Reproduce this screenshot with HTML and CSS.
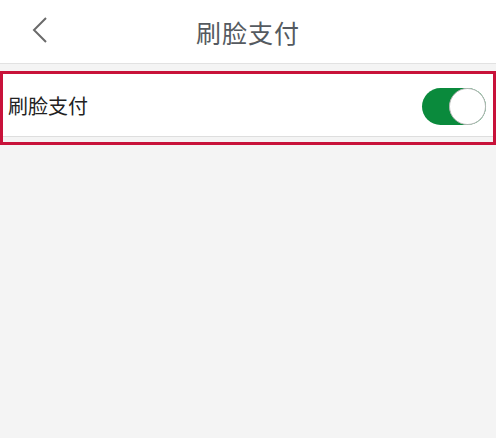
FILE: index.html
```html
<!DOCTYPE html>
<html lang="zh-CN">
<head>
    <meta charset="UTF-8">
    <meta name="viewport" content="width=device-width, initial-scale=1.0">
    <title>刷脸支付</title>
    <link rel="stylesheet" href="styles.css">
</head>
<body>
    <div class="header">
        <button class="back-button">
            <svg width="18" height="28" viewBox="0 0 18 28">
                <polyline points="15,2 3,14 15,26" fill="none" stroke="#6a6a6a" stroke-width="2"/>
            </svg>
        </button>
        <h1>刷脸支付</h1>
    </div>

    <div class="highlight">
        <div class="setting-row">
            <span class="setting-label">刷脸支付</span>
            <label class="switch">
                <input type="checkbox" checked>
                <span class="slider"></span>
            </label>
        </div>
    </div>
</body>
</html>
```

FILE: styles.css
```css
body {
    font-family: 'Noto Sans CJK SC', 'Noto Sans', sans-serif;
    margin: 0;
    padding: 0;
    background-color: #f4f4f4;
    height: 438px;
}
.header {
    position: relative;
    height: 63px;
    background-color: #fff;
    border-bottom: 1px solid #e2e2e2;
    display: flex;
    align-items: center;
    justify-content: center;
}
h1 {
    margin: 0;
    font-size: 25px;
    font-weight: normal;
    color: #555a60;
    letter-spacing: 1px;
}
.back-button {
    position: absolute;
    left: 31px;
    top: 16px;
    padding: 0;
    border: none;
    background: none;
    width: 18px;
    height: 28px;
}
.highlight {
    margin-top: 7px;
    border: 3px solid #c8123a;
    padding-bottom: 5px;
}
.setting-row {
    height: 62px;
    background-color: #fff;
    border-bottom: 1px solid #dedede;
    display: flex;
    align-items: center;
    justify-content: space-between;
    padding: 0 7px 0 5px;
}
.setting-label {
    font-size: 20px;
    color: #222;
}
.switch {
    position: relative;
    width: 64px;
    height: 37px;
    margin-top: 2px;
}
.switch input {
    display: none;
}
.slider {
    position: absolute;
    inset: 0;
    border-radius: 19px;
    background-color: #0a8a3c;
}
.slider::after {
    content: '';
    position: absolute;
    right: 0;
    top: 0;
    width: 35px;
    height: 35px;
    border-radius: 50%;
    background-color: #fff;
    border: 1px solid #b8b8b8;
}
```
